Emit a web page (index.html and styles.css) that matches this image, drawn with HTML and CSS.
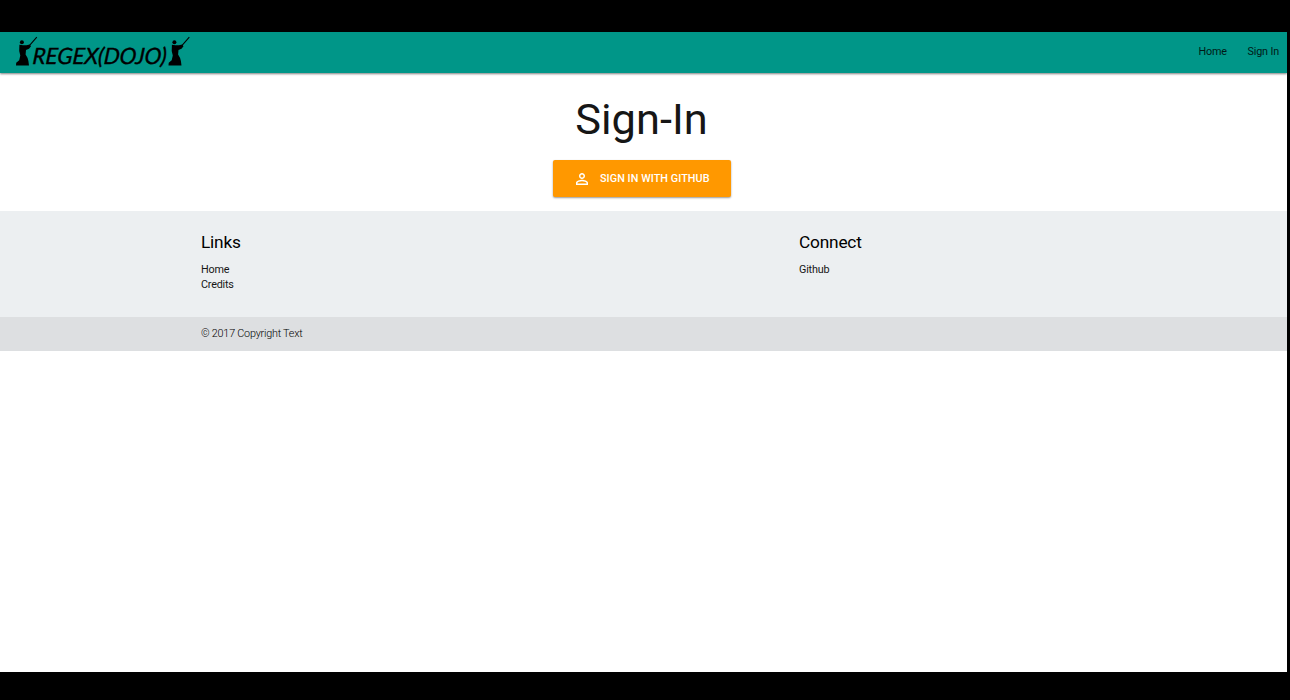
FILE: index.html
```html
<!DOCTYPE html>
<html lang="en">
<head>
<meta charset="utf-8">
<title>Regex Dojo</title>
<link rel="stylesheet" href="styles.css">
</head>
<body>
<div class="page">
  <nav class="navbar">
    <a class="brand">
      <svg class="logo" width="180" height="36" viewBox="0 0 180 36">
        <defs>
          <g id="samurai">
            <circle cx="7.9" cy="6.2" r="2"/>
            <path d="M5.4 8.8 9 9.2 12.5 9.2 15.7 8.4 17 10.3 15 12.8 12 14 11.6 18.5 13.6 22 14.4 25 15 29.6 2 29.6 2.2 26.8 5.2 24.2 6.3 19.5 5.2 15Z"/>
            <path class="sword" d="M14.5 10.6 22.8 1.2"/>
          </g>
        </defs>
        <use href="#samurai"/>
        <text class="wordmark" transform="translate(18 28) skewX(-5)" textLength="134" lengthAdjust="spacing">REGEX(DOJO)</text>
        <use href="#samurai" x="152.5"/>
      </svg>
    </a>
    <div class="nav-links"><a>Home</a><a>Sign In</a></div>
  </nav>
  <main class="signin">
    <h1>Sign-In</h1>
    <a class="btn">
      <svg class="person" viewBox="0 0 24 24"><path d="M12 5.9a2.1 2.1 0 1 1 0 4.2 2.1 2.1 0 0 1 0-4.2m0 9c2.97 0 6.1 1.46 6.1 2.1v1.1H5.9V17c0-.64 3.13-2.1 6.1-2.1M12 4C9.79 4 8 5.79 8 8s1.79 4 4 4 4-1.79 4-4-1.79-4-4-4zm0 9c-2.67 0-8 1.34-8 4v3h16v-3c0-2.66-5.33-4-8-4z"/></svg>
      <span>SIGN IN WITH GITHUB</span>
    </a>
  </main>
  <footer>
    <div class="footer-main">
      <section class="links"><h2>Links</h2><a>Home</a><a>Credits</a></section>
      <section class="connect"><h2>Connect</h2><a>Github</a></section>
    </div>
    <div class="copyright">© 2017 Copyright Text</div>
  </footer>
</div>
</body>
</html>
```
FILE: styles.css
```css
* { box-sizing: border-box; }
body { margin: 0; padding: 32px 3px 28px 0; height: 700px; background: #000; font-family: Roboto, sans-serif; color: #161616; }
.page { height: 640px; background: #fff; }
.navbar { position: relative; height: 41px; padding: 4px 8px 0 14px; display: flex; justify-content: space-between; background: #009688; box-shadow: 0 1px 2px rgba(0,0,0,.5); }
.logo { display: block; fill: #000; }
.sword { fill: none; stroke: #000; stroke-width: 1.1; }
.wordmark { font: italic 400 22.5px Lato, sans-serif; stroke: #000; stroke-width: .35; }
.nav-links { display: flex; gap: 20.5px; padding-top: 8px; font-size: 10.8px; line-height: 16px; letter-spacing: -.15px; color: #001a17; }
.signin { height: 138px; padding-top: 16px; display: flex; flex-direction: column; align-items: center; padding-right: 4px; }
h1 { margin: 0 0 10px; font-size: 43.4px; line-height: 61px; font-weight: 400; }
.btn { width: 178px; height: 37px; padding-left: 20px; display: flex; align-items: center; gap: 9.5px; border-radius: 2px; background: #ff9800; color: #fff; font-size: 10.8px; font-weight: 500; letter-spacing: .06px; white-space: nowrap; box-shadow: 0 1px 2px rgba(0,0,0,.4); }
.person { width: 18px; height: 18px; fill: #fff; }
.footer-main { height: 106px; padding: 19px 0 0 201px; display: flex; background: #eceff1; }
.links { width: 598px; }
.footer-main h2 { margin: 0 0 8px; font-size: 17.3px; line-height: 24px; letter-spacing: -.2px; font-weight: 400; color: #000; }
.footer-main a { display: block; font-size: 10.8px; line-height: 15px; letter-spacing: -.2px; }
.copyright { height: 34px; padding-left: 201px; line-height: 34px; font-size: 10.8px; letter-spacing: -.22px; font-weight: 300; color: #000; background: #dddfe1; }
```
